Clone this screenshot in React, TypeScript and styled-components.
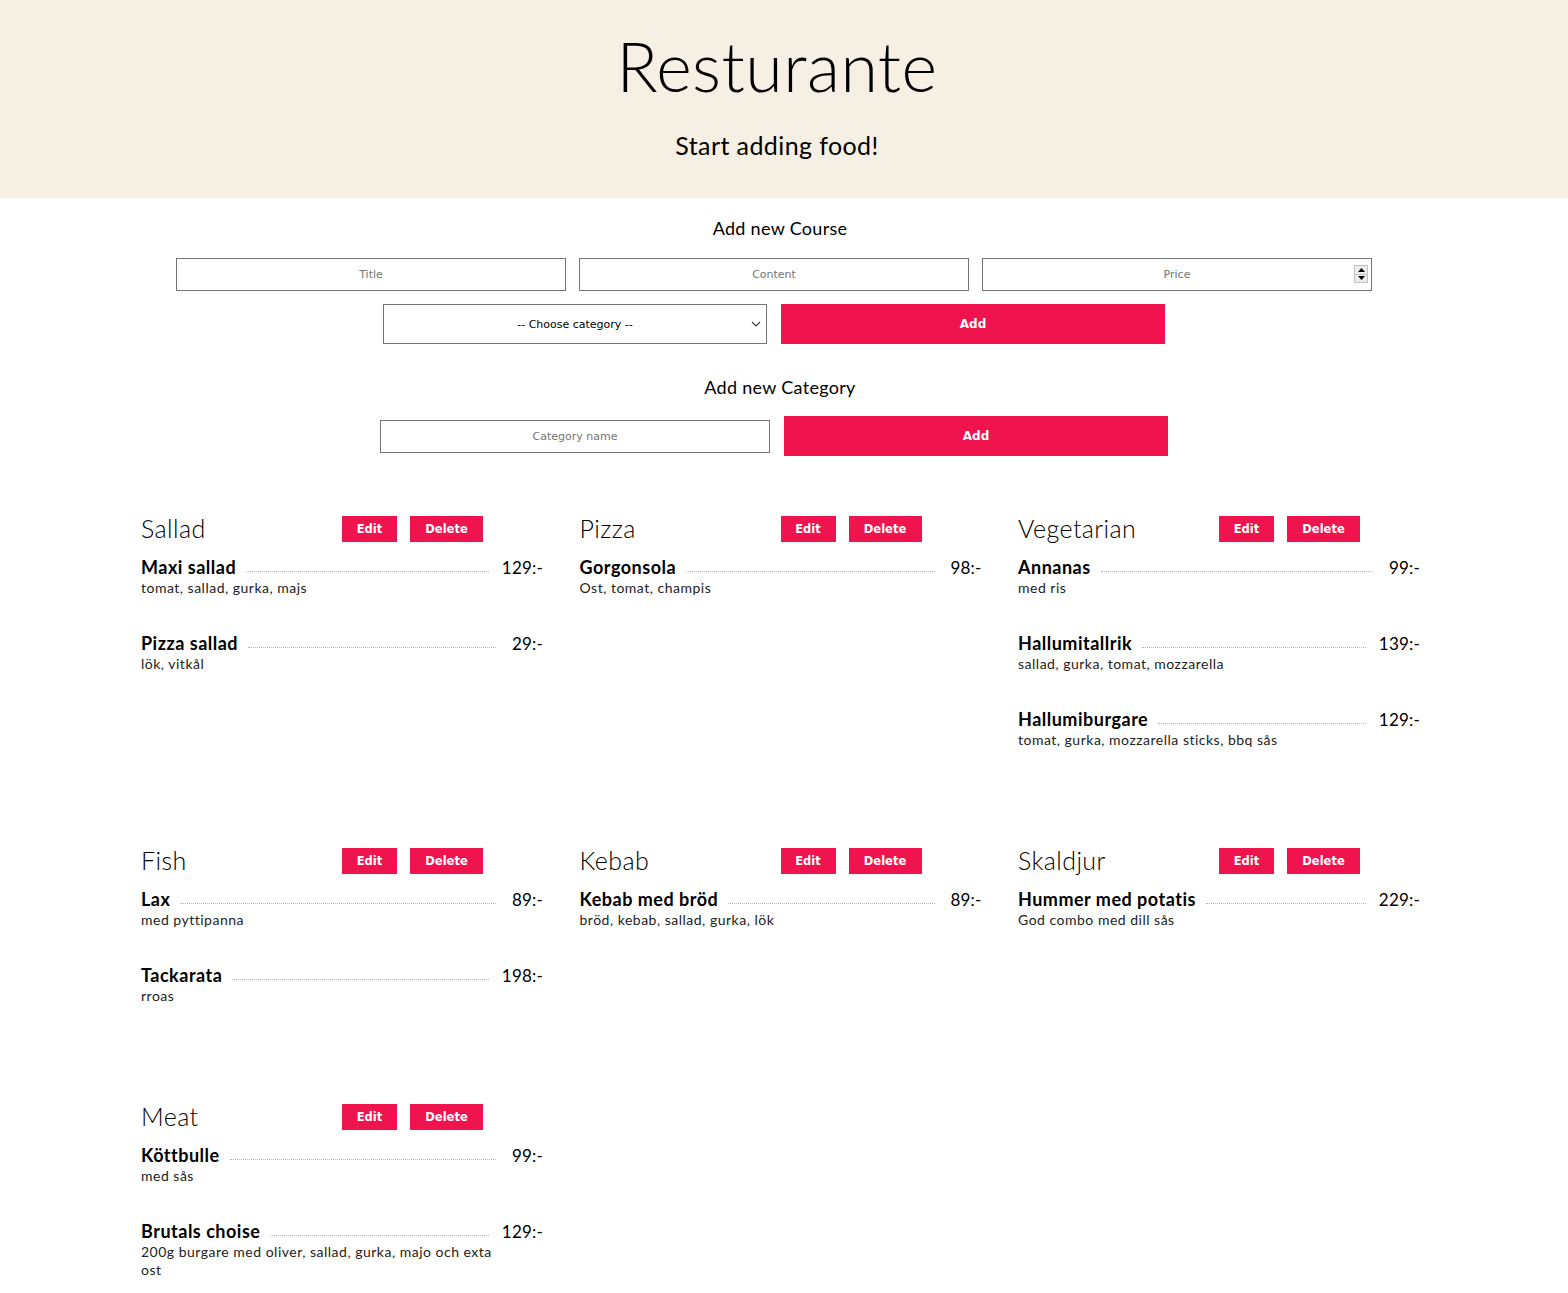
import React from 'react'
import styled, { createGlobalStyle } from 'styled-components'

const GlobalStyle = createGlobalStyle`
  body {
    margin: 0;
    background: #ffffff;
    font-family: Lato, "Noto Sans", sans-serif;
    color: #000;
  }
`

const Page = styled.div`
  width: 100%;
  min-height: 100vh;
  padding-bottom: 20px;
`

const Hero = styled.header`
  height: 198px;
  background: #f6efe3;
  display: flex;
  flex-direction: column;
  align-items: center;
  padding-right: 14px;
`

const HeroTitle = styled.h1`
  margin: 26px 0 0;
  font-size: 68px;
  line-height: 80px;
  font-weight: 300;
  letter-spacing: 0.5px;
`

const HeroSub = styled.p`
  margin: 24px 0 0;
  font-size: 25px;
  line-height: 30px;
  font-weight: 400;
  letter-spacing: 0.4px;
`

const FormSection = styled.section`
  display: flex;
  flex-direction: column;
  align-items: center;
  padding-right: 20px;
`

const FormHeading = styled.h3<{ $top: number }>`
  margin: ${(p) => p.$top}px 0 0;
  padding-left: 12px;
  font-size: 18px;
  line-height: 22px;
  font-weight: 400;
  letter-spacing: 0.3px;
`

const FormRow = styled.div<{ $top: number; $gap: number }>`
  display: flex;
  align-items: center;
  gap: ${(p) => p.$gap}px;
  margin-top: ${(p) => p.$top}px;
`

const TextInput = styled.input`
  box-sizing: border-box;
  width: 390px;
  height: 33px;
  border: 1px solid #767676;
  padding: 0 6px;
  text-align: center;
  font-family: "DejaVu Sans", Verdana, sans-serif;
  font-size: 11px;
  color: #000;
  background: #fff;
  &::placeholder {
    color: #757575;
  }
  &::-webkit-inner-spin-button,
  &::-webkit-outer-spin-button {
    -webkit-appearance: none;
    margin: 0;
  }
`

const FieldWrap = styled.div`
  position: relative;
  display: flex;
`

const Spinner = styled.div`
  position: absolute;
  right: 4px;
  top: 7px;
  width: 14px;
  height: 18px;
  display: flex;
  flex-direction: column;
  border: 1px solid #c4c4c4;
  box-sizing: border-box;
  background: #ececec;
  pointer-events: none;
`

const SpinHalf = styled.div<{ $down?: boolean }>`
  flex: 1;
  display: flex;
  align-items: center;
  justify-content: center;
  border-top: ${(p) => (p.$down ? '1px solid #c4c4c4' : 'none')};
`

const Select = styled.select`
  box-sizing: border-box;
  width: 384px;
  height: 40px;
  border: 1px solid #767676;
  border-radius: 0;
  appearance: none;
  background: #fff;
  text-align: center;
  text-align-last: center;
  font-family: "DejaVu Sans", Verdana, sans-serif;
  font-size: 11px;
  color: #000;
`

const Chevron = styled.svg`
  position: absolute;
  right: 6px;
  top: 17px;
  pointer-events: none;
`

const AddButton = styled.button`
  width: 384px;
  height: 40px;
  border: none;
  background: #f0144e;
  color: #fff;
  font-family: "DejaVu Sans", Verdana, sans-serif;
  font-weight: 700;
  font-size: 12px;
  cursor: pointer;
`

const MenuGrid = styled.div`
  display: grid;
  grid-template-columns: repeat(3, 402px);
  column-gap: 36.5px;
  row-gap: 64px;
  margin: 60px 0 0 141px;
  align-items: start;
`

const Category = styled.div`
  display: flex;
  flex-direction: column;
`

const CategoryHead = styled.div`
  display: flex;
  align-items: center;
  height: 26px;
  margin-bottom: 14px;
`

const CategoryName = styled.h2`
  width: 201px;
  margin: 0;
  font-size: 25px;
  line-height: 26px;
  font-weight: 300;
  letter-spacing: 0.4px;
  transform: translateY(-1px);
`

const SmallButton = styled.button<{ $w: number }>`
  width: ${(p) => p.$w}px;
  height: 26px;
  margin-right: 13px;
  padding: 0;
  border: none;
  background: #f0144e;
  color: #fff;
  font-family: "DejaVu Sans", Verdana, sans-serif;
  font-weight: 700;
  font-size: 11.5px;
  cursor: pointer;
`

const Dish = styled.div`
  margin-bottom: 35px;
`

const DishLine = styled.div`
  display: flex;
  align-items: baseline;
  height: 22px;
`

const DishName = styled.span`
  font-size: 18px;
  line-height: 22px;
  font-weight: 700;
  letter-spacing: 0.5px;
  white-space: nowrap;
`

const Dots = styled.span`
  flex: 1;
  margin: 0 13px 0 10px;
  border-bottom: 1px dotted #b8b8b8;
  transform: translateY(-2px);
`

const Price = styled.span`
  min-width: 34px;
  text-align: right;
  font-size: 17px;
  line-height: 22px;
  font-weight: 400;
  letter-spacing: 0.2px;
`

const DishDesc = styled.p`
  max-width: 355px;
  margin: 1px 0 0;
  font-size: 14px;
  line-height: 18px;
  letter-spacing: 0.5px;
  color: #222;
`

type Course = { title: string; content: string; price: string }
type Group = { name: string; courses: Course[] }

const menu: Group[] = [
  {
    name: 'Sallad',
    courses: [
      { title: 'Maxi sallad', content: 'tomat, sallad, gurka, majs', price: '129:-' },
      { title: 'Pizza sallad', content: 'lök, vitkål', price: '29:-' },
    ],
  },
  {
    name: 'Pizza',
    courses: [{ title: 'Gorgonsola', content: 'Ost, tomat, champis', price: '98:-' }],
  },
  {
    name: 'Vegetarian',
    courses: [
      { title: 'Annanas', content: 'med ris', price: '99:-' },
      { title: 'Hallumitallrik', content: 'sallad, gurka, tomat, mozzarella', price: '139:-' },
      { title: 'Hallumiburgare', content: 'tomat, gurka, mozzarella sticks, bbq sås', price: '129:-' },
    ],
  },
  {
    name: 'Fish',
    courses: [
      { title: 'Lax', content: 'med pyttipanna', price: '89:-' },
      { title: 'Tackarata', content: 'rroas', price: '198:-' },
    ],
  },
  {
    name: 'Kebab',
    courses: [{ title: 'Kebab med bröd', content: 'bröd, kebab, sallad, gurka, lök', price: '89:-' }],
  },
  {
    name: 'Skaldjur',
    courses: [{ title: 'Hummer med potatis', content: 'God combo med dill sås', price: '229:-' }],
  },
  {
    name: 'Meat',
    courses: [
      { title: 'Köttbulle', content: 'med sås', price: '99:-' },
      {
        title: 'Brutals choise',
        content: '200g burgare med oliver, sallad, gurka, majo och exta ost',
        price: '129:-',
      },
    ],
  },
]

export default function App() {
  return (
    <Page>
      <GlobalStyle />
      <Hero>
        <HeroTitle>Resturante</HeroTitle>
        <HeroSub>Start adding food!</HeroSub>
      </Hero>

      <FormSection>
        <FormHeading $top={19}>Add new Course</FormHeading>
        <FormRow $top={19} $gap={13}>
          <TextInput placeholder="Title" />
          <TextInput placeholder="Content" />
          <FieldWrap>
            <TextInput type="number" placeholder="Price" />
            <Spinner>
              <SpinHalf>
                <svg width="7" height="4" viewBox="0 0 7 4">
                  <path d="M0 4 L3.5 0 L7 4 Z" fill="#000" />
                </svg>
              </SpinHalf>
              <SpinHalf $down>
                <svg width="7" height="4" viewBox="0 0 7 4">
                  <path d="M0 0 L3.5 4 L7 0 Z" fill="#000" />
                </svg>
              </SpinHalf>
            </Spinner>
          </FieldWrap>
        </FormRow>
        <FormRow $top={13} $gap={14}>
          <FieldWrap>
            <Select defaultValue="">
              <option value="">-- Choose category --</option>
              {menu.map((g) => (
                <option key={g.name} value={g.name}>
                  {g.name}
                </option>
              ))}
            </Select>
            <Chevron width="10" height="6" viewBox="0 0 10 6">
              <path d="M1 1 L5 5 L9 1" fill="none" stroke="#444" strokeWidth="1.2" />
            </Chevron>
          </FieldWrap>
          <AddButton>Add</AddButton>
        </FormRow>

        <FormHeading $top={32}>Add new Category</FormHeading>
        <FormRow $top={18} $gap={14}>
          <TextInput placeholder="Category name" />
          <AddButton>Add</AddButton>
        </FormRow>
      </FormSection>

      <MenuGrid>
        {menu.map((g) => (
          <Category key={g.name}>
            <CategoryHead>
              <CategoryName>{g.name}</CategoryName>
              <SmallButton $w={55}>Edit</SmallButton>
              <SmallButton $w={73}>Delete</SmallButton>
            </CategoryHead>
            {g.courses.map((c) => (
              <Dish key={c.title}>
                <DishLine>
                  <DishName>{c.title}</DishName>
                  <Dots />
                  <Price>{c.price}</Price>
                </DishLine>
                <DishDesc>{c.content}</DishDesc>
              </Dish>
            ))}
          </Category>
        ))}
      </MenuGrid>
    </Page>
  )
}
